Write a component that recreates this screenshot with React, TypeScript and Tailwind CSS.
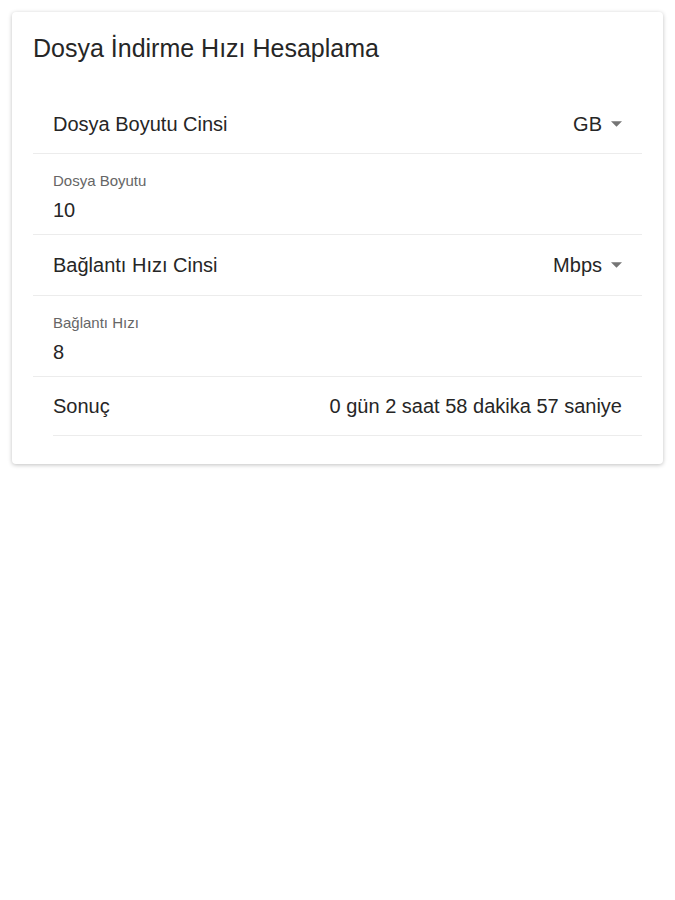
import React from "react";

function Caret() {
  return (
    <svg width="11" height="6" viewBox="0 0 10 5" className="ml-[9px] fill-[#757575]">
      <path d="M0 0 L10 0 L5 5 Z" />
    </svg>
  );
}

function SelectRow({ label, value, h }: { label: string; value: string; h: string }) {
  return (
    <div className={`flex items-center justify-between border-b border-[#ececec] px-5 ${h}`}>
      <span>{label}</span>
      <span className="flex items-center">
        {value}
        <Caret />
      </span>
    </div>
  );
}

function InputRow({ label, value }: { label: string; value: string }) {
  return (
    <div className="flex h-[81px] flex-col border-b border-[#ececec] px-5 pt-[19px]">
      <span className="text-[15px] leading-[16px] text-[#666]">{label}</span>
      <span className="mt-[9px] text-[20px] leading-[24px]">{value}</span>
    </div>
  );
}

export default function App() {
  return (
    <div
      className="min-h-[900px] bg-white p-3 text-[#262626]"
      style={{ fontFamily: '"Liberation Sans", Arial, sans-serif' }}
    >
      <div className="rounded-[4px] bg-white px-[21px] pb-[28px] pt-[22px] shadow-[0_1px_4px_rgba(0,0,0,0.25)]">
        <h1 className="text-[25px] leading-[28px]">Dosya İndirme Hızı Hesaplama</h1>
        <div className="mt-[32px] text-[20px]">
          <SelectRow label="Dosya Boyutu Cinsi" value="GB" h="h-[60px]" />
          <InputRow label="Dosya Boyutu" value="10" />
          <SelectRow label="Bağlantı Hızı Cinsi" value="Mbps" h="h-[61px]" />
          <InputRow label="Bağlantı Hızı" value="8" />
          <div className="ml-5 flex h-[59px] items-center justify-between border-b border-[#ececec] pr-5">
            <span>Sonuç</span>
            <span>0 gün 2 saat 58 dakika 57 saniye</span>
          </div>
        </div>
      </div>
    </div>
  );
}
